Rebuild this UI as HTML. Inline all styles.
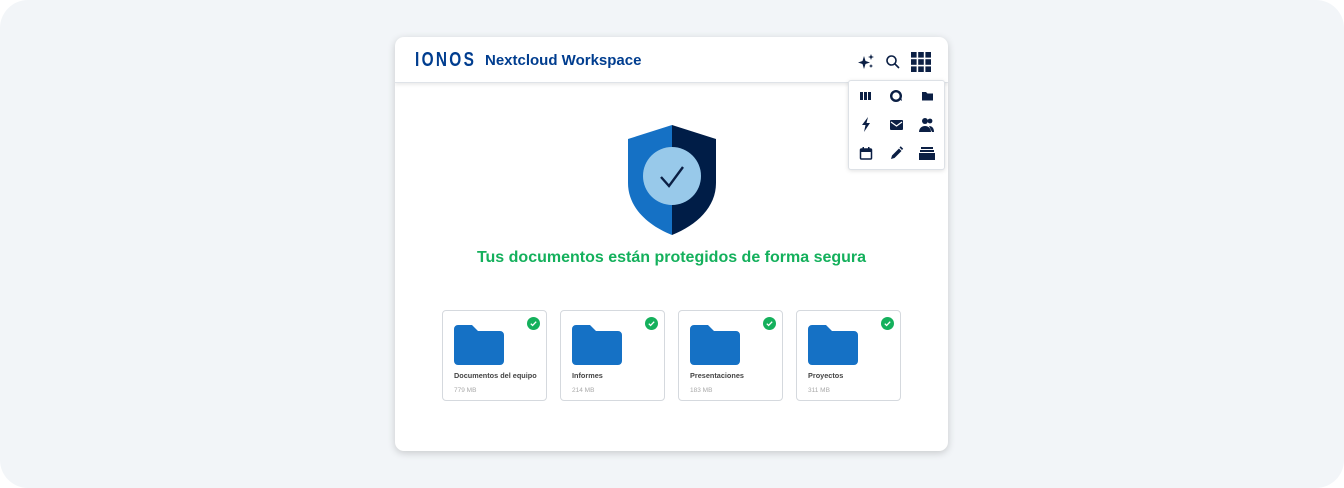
<!DOCTYPE html>
<html><head><style>
*{margin:0;padding:0;box-sizing:border-box}
body{width:1344px;height:488px;background:#fff;font-family:"Liberation Sans",sans-serif;position:relative;overflow:hidden}
.bg{position:absolute;left:0;top:0;width:1344px;height:488px;background:#f2f5f8;border-radius:28px}
.win{position:absolute;left:395px;top:37px;width:553px;height:414px;background:#fff;border-radius:9px;box-shadow:0 2px 8px rgba(0,0,0,.18);overflow:hidden}
.hdr{position:absolute;left:0;top:0;width:553px;height:46px;border-bottom:1px solid #dfe3e8;box-shadow:0 2px 3px rgba(0,0,0,.08)}
.logo{position:absolute;left:20px;top:12px;font-size:20px;font-weight:bold;color:#003d8f;letter-spacing:3px;transform:scaleX(.77);transform-origin:left}
.title{position:absolute;left:90px;top:15px;font-size:15px;font-weight:bold;color:#003d8f}
.msg{position:absolute;left:0;width:553px;top:212px;text-align:center;color:#14b05c;font-size:16px;font-weight:bold}
.card{position:absolute;top:273px;width:105px;height:91px;border:1px solid #d5d9de;border-radius:4px;background:#fff}
.card .n{position:absolute;left:11px;top:60px;font-size:7.3px;font-weight:bold;color:#444}
.card .s{position:absolute;left:11px;top:76px;font-size:6.5px;color:#aaa}
.card svg.f{position:absolute;left:11px;top:14px}
.card svg.c{position:absolute;left:84px;top:6px}
.pop{position:absolute;left:848px;top:80px;width:97px;height:90px;background:#fff;border:1px solid #dde1e6;border-radius:3px;box-shadow:0 1px 4px rgba(0,0,0,.12)}
</style></head><body>
<div class="bg"></div>
<div class="win">
 <div class="hdr">
  <div class="logo">IONOS</div>
  <div class="title">Nextcloud Workspace</div>
  <svg style="position:absolute;left:462px;top:16px" width="18" height="18" viewBox="0 0 18 18" fill="#0b1f44"><path d="M7 3L8.5 8 13 9.5 8.5 11 7 16 5.5 11 1 9.5 5.5 8z"/><path d="M14 1l.8 2.2L17 4l-2.2.8L14 7l-.8-2.2L11 4l2.2-.8z"/><path d="M14 11l.6 1.4 1.4.6-1.4.6L14 15l-.6-1.4L12 13l1.4-.6z"/></svg>
  <svg style="position:absolute;left:490px;top:17px" width="16" height="16" viewBox="0 0 16 16" fill="none" stroke="#0b1f44" stroke-width="1.6"><circle cx="6.5" cy="6.5" r="4.5"/><path d="M10 10l4 4"/></svg>
  <svg style="position:absolute;left:516px;top:15px" width="20" height="20" viewBox="0 0 20 20" fill="#0b1f44"><rect x="0" y="0" width="5.6" height="5.6"/><rect x="7.2" y="0" width="5.6" height="5.6"/><rect x="14.4" y="0" width="5.6" height="5.6"/><rect x="0" y="7.2" width="5.6" height="5.6"/><rect x="7.2" y="7.2" width="5.6" height="5.6"/><rect x="14.4" y="7.2" width="5.6" height="5.6"/><rect x="0" y="14.4" width="5.6" height="5.6"/><rect x="7.2" y="14.4" width="5.6" height="5.6"/><rect x="14.4" y="14.4" width="5.6" height="5.6"/></svg>
 </div>
 <svg style="position:absolute;left:232px;top:88px" width="90" height="112" viewBox="0 0 90 112">
  <path d="M45 0L1 14V58C1 82 20 100 45 110Z" fill="#1571c5"/>
  <path d="M45 0L89 14V58C89 82 70 100 45 110Z" fill="#001d47"/>
  <circle cx="45" cy="51" r="29" fill="#98c9ea"/>
  <path d="M34 52l8 9 14-19" fill="none" stroke="#0b1f44" stroke-width="2.4"/>
 </svg>
 <div class="msg">Tus documentos están protegidos de forma segura</div>
 <div class="card" style="left:47px"><svg class="f" width="50" height="40" viewBox="0 0 50 40"><path d="M0 4a4 4 0 014-4h14l6 6h22a4 4 0 014 4v26a4 4 0 01-4 4H4a4 4 0 01-4-4z" fill="#1571c5"/></svg><svg class="c" width="13" height="13" viewBox="0 0 13 13"><circle cx="6.5" cy="6.5" r="6.5" fill="#14b05c"/><path d="M3.8 6.7l1.8 1.8 3.6-3.8" fill="none" stroke="#fff" stroke-width="1.3"/></svg><div class="n">Documentos del equipo</div><div class="s">779 MB</div></div>
 <div class="card" style="left:165px"><svg class="f" width="50" height="40" viewBox="0 0 50 40"><path d="M0 4a4 4 0 014-4h14l6 6h22a4 4 0 014 4v26a4 4 0 01-4 4H4a4 4 0 01-4-4z" fill="#1571c5"/></svg><svg class="c" width="13" height="13" viewBox="0 0 13 13"><circle cx="6.5" cy="6.5" r="6.5" fill="#14b05c"/><path d="M3.8 6.7l1.8 1.8 3.6-3.8" fill="none" stroke="#fff" stroke-width="1.3"/></svg><div class="n">Informes</div><div class="s">214 MB</div></div>
 <div class="card" style="left:283px"><svg class="f" width="50" height="40" viewBox="0 0 50 40"><path d="M0 4a4 4 0 014-4h14l6 6h22a4 4 0 014 4v26a4 4 0 01-4 4H4a4 4 0 01-4-4z" fill="#1571c5"/></svg><svg class="c" width="13" height="13" viewBox="0 0 13 13"><circle cx="6.5" cy="6.5" r="6.5" fill="#14b05c"/><path d="M3.8 6.7l1.8 1.8 3.6-3.8" fill="none" stroke="#fff" stroke-width="1.3"/></svg><div class="n">Presentaciones</div><div class="s">183 MB</div></div>
 <div class="card" style="left:401px"><svg class="f" width="50" height="40" viewBox="0 0 50 40"><path d="M0 4a4 4 0 014-4h14l6 6h22a4 4 0 014 4v26a4 4 0 01-4 4H4a4 4 0 01-4-4z" fill="#1571c5"/></svg><svg class="c" width="13" height="13" viewBox="0 0 13 13"><circle cx="6.5" cy="6.5" r="6.5" fill="#14b05c"/><path d="M3.8 6.7l1.8 1.8 3.6-3.8" fill="none" stroke="#fff" stroke-width="1.3"/></svg><div class="n">Proyectos</div><div class="s">311 MB</div></div>
</div>
<div class="pop">
<svg width="97" height="90" viewBox="0 0 97 90" fill="#0b1f44">
 <rect x="11" y="11" width="3" height="8"/><rect x="15" y="11" width="3" height="8"/><rect x="19" y="11" width="3" height="8"/>
 <circle cx="47" cy="15" r="4.8" fill="none" stroke="#0b1f44" stroke-width="2.4"/><path d="M50 18l3 2-1-4z"/>
 <path d="M73 11h4l1.5 1.5H84v7H73z"/>
 <path d="M19 36l-6 8h3.5l-1.5 7 6-9h-3.5z"/>
 <rect x="41" y="39" width="13" height="10" rx="1"/><path d="M42 41l5.5 4 5.5-4" fill="none" stroke="#fff" stroke-width="1.2"/>
 <circle cx="76" cy="40" r="3"/><path d="M70 51c0-4 3-6 6-6s6 2 6 6z"/><circle cx="81" cy="40" r="2.4"/><path d="M80 45c3 0 5 2 5 6h-2z"/>
 <rect x="11.5" y="68" width="11" height="10" rx="1" fill="none" stroke="#0b1f44" stroke-width="1.5"/><rect x="11" y="68" width="12" height="3"/><rect x="13.5" y="66" width="1.5" height="3"/><rect x="19" y="66" width="1.5" height="3"/>
 <path d="M42 78l1-3.5 7-7 2.5 2.5-7 7z"/><path d="M50.5 66.5l1.2-1.2 2.5 2.5-1.2 1.2z"/>
 <rect x="72" y="66" width="12" height="2"/><rect x="71" y="69" width="14" height="2"/><rect x="70" y="72" width="16" height="7"/>
</svg>
</div>
</body></html>
